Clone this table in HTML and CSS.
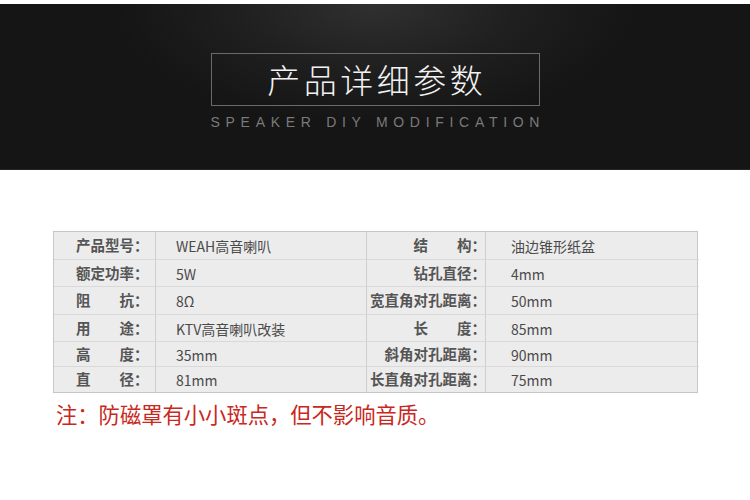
FILE: index.html
```html
<!DOCTYPE html>
<html lang="zh-CN">
<head>
<meta charset="utf-8">
<link rel="stylesheet" href="styles.css">
</head>
<body>
<div class="page">
  <header class="banner">
    <div class="title-box"><h1 class="title">产品详细参数</h1></div>
    <p class="subtitle">SPEAKER DIY MODIFICATION</p>
  </header>

  <div class="specs">
    <div class="cell lab l1 r1"><span class="lw"><span>产品型号：</span></span></div>
    <div class="cell val r1">WEAH高音喇叭</div>
    <div class="cell lab l2 r1"><span class="lw"><span>结</span><span>构：</span></span></div>
    <div class="cell val last r1">油边锥形纸盆</div>

    <div class="cell lab l1"><span class="lw"><span>额定功率：</span></span></div>
    <div class="cell val">5W</div>
    <div class="cell lab l2"><span class="lw"><span>钻孔直径：</span></span></div>
    <div class="cell val last">4mm</div>

    <div class="cell lab l1"><span class="lw"><span>阻</span><span>抗：</span></span></div>
    <div class="cell val">8Ω</div>
    <div class="cell lab l2"><span class="lw"><span>宽直角对孔距离：</span></span></div>
    <div class="cell val last">50mm</div>

    <div class="cell lab l1"><span class="lw"><span>用</span><span>途：</span></span></div>
    <div class="cell val">KTV高音喇叭改装</div>
    <div class="cell lab l2"><span class="lw"><span>长</span><span>度：</span></span></div>
    <div class="cell val last">85mm</div>

    <div class="cell lab l1"><span class="lw"><span>高</span><span>度：</span></span></div>
    <div class="cell val">35mm</div>
    <div class="cell lab l2"><span class="lw"><span>斜角对孔距离：</span></span></div>
    <div class="cell val last">90mm</div>

    <div class="cell lab l1 bottom"><span class="lw"><span>直</span><span>径：</span></span></div>
    <div class="cell val bottom">81mm</div>
    <div class="cell lab l2 bottom"><span class="lw"><span>长直角对孔距离：</span></span></div>
    <div class="cell val last bottom">75mm</div>
  </div>

  <p class="note">注：防磁罩有小小斑点，但不影响音质。</p>
</div>
</body>
</html>
```

FILE: styles.css
```css
* { box-sizing: border-box; }
html, body { margin: 0; padding: 0; background: #ffffff; }
body {
  width: 750px;
  height: 500px;
  overflow: hidden;
  font-family: "Noto Sans CJK SC", "Noto Sans", sans-serif;
}
.page { width: 750px; padding-top: 4px; }

.banner {
  height: 166px;
  background:
    radial-gradient(ellipse 260px 120px at 375px 0px, #303030 0%, #1f1f1f 55%, rgba(20,20,20,0) 100%),
    #151515;
  border-bottom: 1px solid #262626;
  display: flex;
  flex-direction: column;
  align-items: center;
  padding-top: 49px;
}
.title-box {
  width: 329px;
  height: 53px;
  border: 1px solid #6a6a6a;
  display: flex;
  align-items: center;
  justify-content: center;
}
.title {
  margin: 0;
  font-size: 33px;
  font-weight: 300;
  color: #f2f2f2;
  letter-spacing: 3.5px;
  padding-left: 3.5px;
  line-height: 1;
}
.subtitle {
  margin: 8px 0 0 0;
  font-family: "Liberation Sans", Arial, sans-serif;
  font-size: 14px;
  letter-spacing: 5.7px;
  padding-left: 5.7px;
  color: #7a7a7a;
  line-height: 16px;
}

.specs {
  margin: 61px 0 0 53px;
  width: 645px;
  display: grid;
  grid-template-columns: 102px 211px 119px 213px;
  grid-template-rows: 28px 27px 28px 27px 25px 25px;
  background: #ececec;
  border: 1px solid #c6c6c6;
}
.cell {
  display: flex;
  align-items: center;
  border-bottom: 1px solid #d9d9d9;
  border-right: 1px solid #cfcfcf;
  font-size: 14px;
  line-height: 1;
  white-space: nowrap;
}
.cell.last { border-right: none; }
.cell.bottom { border-bottom: none; }
.lab {
  color: #555555;
  font-weight: 700;
  font-size: 14.5px;
}
.l1 { padding-left: 22px; }
.l2 { justify-content: flex-end; padding-right: 0; }
.l2 .lw { margin-right: -1px; }
.lw {
  display: inline-flex;
  justify-content: space-between;
  min-width: 72.5px;
}
.val {
  color: #4a4a4a;
  padding-left: 20px;
  padding-top: 1px;
}
.l2 + .val { padding-left: 25px; }

.note {
  margin: 6px 0 0 56px;
  font-size: 21.3px;
  line-height: 30px;
  color: #c8281d;
}
```
